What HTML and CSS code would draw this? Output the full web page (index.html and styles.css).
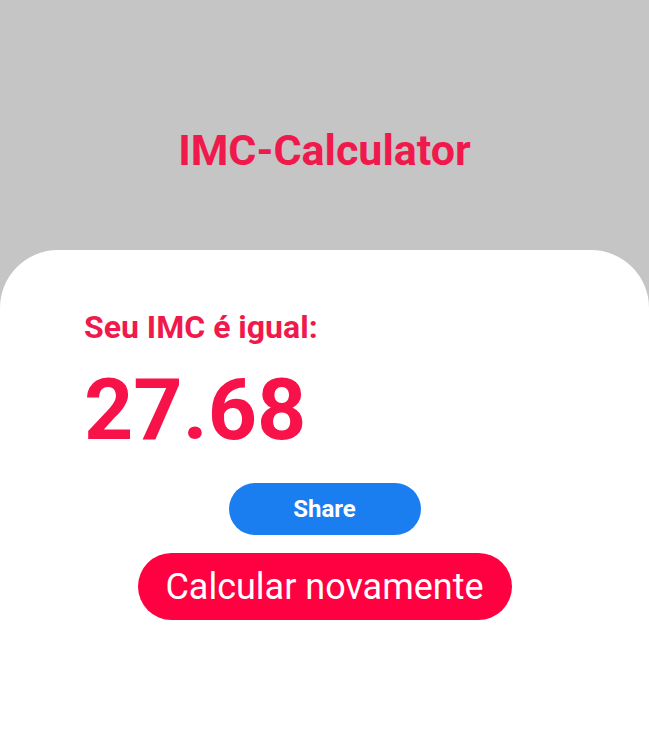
FILE: index.html
```html
<!DOCTYPE html>
<html>
<head>
<meta charset="utf-8">
<link rel="stylesheet" href="styles.css">
</head>
<body>
<div class="app">
  <header class="top">
    <h1 class="title">IMC-Calculator</h1>
  </header>
  <main class="card">
    <div class="result">
      <p class="label">Seu IMC é igual:</p>
      <p class="value">27.68</p>
    </div>
    <div class="actions">
      <button class="btn share">Share</button>
      <button class="btn again">Calcular novamente</button>
    </div>
  </main>
</div>
</body>
</html>
```
FILE: styles.css
```css
* { box-sizing: border-box; }
html, body { margin: 0; padding: 0; height: 100%; }
body { font-family: Roboto, "Noto Sans", sans-serif; background: #c5c5c5; }
.app { display: flex; flex-direction: column; height: 729px; }
.top { height: 250px; display: flex; justify-content: center; padding-top: 126px; }
.title { margin: 0; color: #f0194c; font-size: 43px; font-weight: 700; line-height: 48px; height: 48px; }
.card { flex: 1; background: #fff; border-radius: 58px 58px 0 0; padding: 58px 0 0 84px; display: flex; flex-direction: column; }
.result { display: flex; flex-direction: column; }
.label { margin: 0; color: #f0194c; font-size: 32px; font-weight: 700; line-height: 38px; }
.value { margin: 19px 0 0; color: #f7124a; font-size: 86px; font-weight: 700; line-height: 90px; }
.actions { display: flex; flex-direction: column; align-items: center; gap: 18px; margin: 28px 0 0 -84px; }
.btn { border: none; border-radius: 40px; color: #fff; font-family: Roboto, "Noto Sans", sans-serif; padding: 0; }
.share { width: 192px; height: 52px; background: #1a7ef0; font-size: 24px; font-weight: 700; }
.again { width: 374px; height: 67px; background: #ff0040; font-size: 36px; font-weight: 400; }
```
